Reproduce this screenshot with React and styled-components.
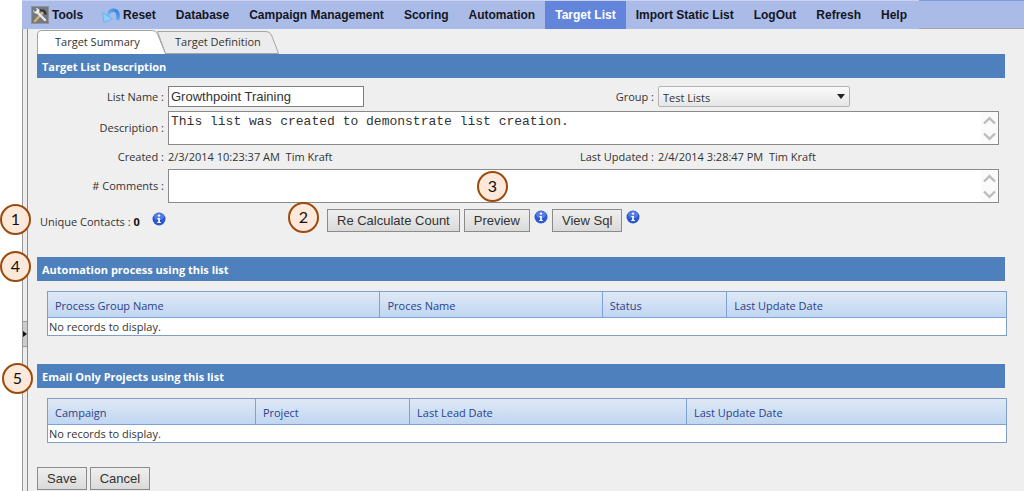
import React from "react";
import styled, { createGlobalStyle } from "styled-components";

const UI = `"Open Sans", "Noto Sans", sans-serif`;
const ARIAL = `"Liberation Sans", Arial, sans-serif`;

const GlobalStyle = createGlobalStyle`
  *, *::before, *::after { box-sizing: border-box; }
  body { margin: 0; background: #fff; font-family: ${UI}; font-size: 11px; line-height: 16px; color: #333; }
  #root { min-height: 100vh; display: flex; flex-direction: column; }
  button, input, select, textarea { font: inherit; color: inherit; margin: 0; }
`;

const Page = styled.div`
  flex: 1;
  display: flex;
  flex-direction: column;
  padding-left: 22px;
`;

const Header = styled.header`
  display: flex;
  align-items: flex-start;
  height: 29px;
`;

const Nav = styled.nav`
  display: flex;
  height: 29px;
  padding: 0 2px 0 9px;
  background: #abbbe8;
  border-top: 1px solid #c9d3f0;
`;

const NavLink = styled.a`
  display: flex;
  align-items: center;
  gap: 3px;
  padding: 0 10px 0 ${(p) => (p.$icon ? "0" : "10px")};
  font: bold 12px/16px ${ARIAL};
  text-decoration: none;
  white-space: nowrap;
  color: ${(p) => (p.$active ? "#fff" : "#14161f")};
  background: ${(p) => (p.$active ? "#6285db" : "transparent")};
  &:nth-child(2) { margin-left: 9px; }
`;

const NavFill = styled.div`
  flex: 1;
  height: 29px;
  background: #abbbe8;
  border-top: 1px solid #7f9be0;
  border-bottom: 1px solid #a3a3ab;
`;

const Body = styled.div`
  flex: 1;
  display: flex;
  background: #efefef;
`;

const Splitter = styled.div`
  flex: none;
  width: 6px;
  border-left: 1px solid #999;
  border-right: 1px solid #8c8c8c;
  background: #ececec;
`;

const Collapse = styled.button`
  display: flex;
  align-items: center;
  width: 4px;
  height: 26px;
  margin-top: 292px;
  padding: 0;
  border: solid #999;
  border-width: 1px 0;
  background: #ccc;
  svg { display: block; flex: none; }
`;

const Main = styled.main`
  flex: 1;
  min-width: 0;
  padding: 1px 19px 1px 9px;
`;

const Tabs = styled.div`
  display: flex;
  align-items: flex-end;
`;

const Tab = styled.button`
  position: relative;
  z-index: ${(p) => (p.$active ? 2 : 1)};
  width: ${(p) => (p.$active ? 129 : 123)}px;
  height: 24px;
  padding: 0 0 0 18px;
  margin-right: -9px;
  border: 0;
  background: none;
  text-align: left;
  line-height: 16px;
  white-space: nowrap;
`;

const TabShape = styled.svg`
  position: absolute;
  inset: 0;
  z-index: -1;
  width: 100%;
  height: 100%;
`;

const SectionBar = styled.h2`
  position: relative;
  margin: ${(p) => p.$above || 0}px 0 0;
  padding: 6px 5px 4px;
  font-size: 11px;
  line-height: 14px;
  font-weight: bold;
  color: #fff;
  background: #4d80bc;
`;

const Form = styled.div`
  display: flex;
  flex-direction: column;
  gap: 4px;
  padding: 8px 6px 0 0;
`;

const Row = styled.div`
  display: grid;
  grid-template-columns: 127px minmax(0, 1fr);
  column-gap: 4px;
  align-items: center;
`;

const Label = styled.label`
  text-align: right;
  white-space: nowrap;
`;

const Split = styled.div`
  display: grid;
  grid-template-columns: minmax(0, 486fr) minmax(0, 341fr);
  column-gap: 4px;
  align-items: center;
`;

const Ends = styled.div`
  display: flex;
  justify-content: space-between;
  align-items: center;
`;

const Meta = styled.span`
  white-space: pre;
`;

const TextInput = styled.input`
  width: 196px;
  height: 21px;
  padding: 0 2px;
  border: 1px solid #7f7f7f;
  background: #fff;
  font: 13px/16px ${ARIAL};
`;

const SelectBox = styled.div`
  position: relative;
  width: 192px;
  height: 21px;
  svg { position: absolute; right: 5px; top: 8px; pointer-events: none; }
`;

const Select = styled.select`
  appearance: none;
  display: block;
  width: 100%;
  height: 21px;
  padding: 2px 4px 0;
  border: 1px solid #b4b4b4;
  border-radius: 2px;
  background: linear-gradient(#fafafa, #e6e6e6);
`;

const AreaBox = styled.div`
  display: flex;
  height: 34px;
  border: 1px solid #8a8a8a;
  background: #fff;
`;

const Area = styled.textarea`
  flex: 1;
  min-width: 0;
  padding: 2px;
  border: 0;
  resize: none;
  overflow: hidden;
  background: transparent;
  font: 13px/16px "Liberation Mono", "Courier New", monospace;
`;

const Arrows = styled.div`
  display: flex;
  flex-direction: column;
  justify-content: space-around;
  align-items: center;
  width: 17px;
  background: #fafafa;
`;

const Actions = styled.div`
  position: relative;
  display: flex;
  align-items: flex-start;
  padding: 6px 0 0 3px;
`;

const Count = styled.div`
  display: flex;
  align-items: center;
  flex: 0 0 287px;
  padding-top: 5px;
  b { margin-left: 3px; color: #111; }
  svg { margin: -6px 0 0 12px; }
`;

const ButtonGroup = styled.div`
  display: flex;
  align-items: flex-start;
  gap: 4px;
  svg { margin-top: 1px; }
`;

const Button = styled.button`
  height: 23px;
  padding: 0 9px;
  border: 1px solid #8b8b8b;
  background: linear-gradient(#efefef, #dadada);
  font: 13px/16px ${ARIAL};
  white-space: nowrap;
`;

const Callout = styled.span`
  position: absolute;
  z-index: 3;
  left: ${(p) => p.$x}px;
  top: ${(p) => p.$y}px;
  display: flex;
  align-items: center;
  justify-content: center;
  width: 31px;
  height: 31px;
  padding-bottom: 2px;
  border: 2px solid #9c4a0c;
  border-radius: 50%;
  background: #fde8da;
  font: 16px/20px Lato, sans-serif;
  color: #111;
`;

const Table = styled.table`
  width: calc(100% - 8px);
  margin: 10px -2px 0 10px;
  border: 1px solid #7f9fc8;
  border-collapse: separate;
  border-spacing: 0;
  table-layout: fixed;
  background: #fff;
`;

const Th = styled.th`
  width: ${(p) => p.$w}%;
  height: 26px;
  padding: 2px 7px 0;
  border-bottom: 1px solid #7fa2d6;
  border-right: 1px solid #7fa2d6;
  &:last-child { border-right: 0; }
  background: linear-gradient(#dfe9f6, #c0d6f1);
  font-weight: normal;
  text-align: left;
  color: #2b3f8c;
`;

const Td = styled.td`
  height: 17px;
  padding: 0 1px;
  line-height: 16px;
`;

const Footer = styled.div`
  display: flex;
  gap: 3px;
  margin-top: 24px;
`;

const ToolsIcon = () => (
  <svg width="18" height="18" viewBox="0 0 18 18" aria-hidden="true">
    <rect width="18" height="18" fill="#8f939c" />
    <rect x="1" y="1" width="16" height="16" fill="#747880" />
    <path d="M4 15 12 6" stroke="#d9b56a" strokeWidth="2.4" strokeLinecap="round" />
    <path d="M9 3l5 1 2 4-2 1-2-3-3-1z" fill="#33363c" />
    <path d="M6 6l8 8" stroke="#e8ebef" strokeWidth="2.4" strokeLinecap="round" />
    <path d="M2 4l2 2 2-2-1-2c3 0 4 3 3 5-2 2-6 0-6-3z" fill="#e8ebef" />
  </svg>
);

const ResetIcon = () => (
  <svg width="18" height="16" viewBox="0 0 18 16" aria-hidden="true">
    <defs>
      <linearGradient id="reset-arc" x1="0" y1="1" x2="1" y2="0">
        <stop offset="0" stopColor="#8fd2fa" />
        <stop offset="1" stopColor="#2f80e0" />
      </linearGradient>
    </defs>
    <path d="M5.500 10C6.500 5.500 9 3 12 3.200 15.500 3.500 17 8 15.200 13" fill="none" stroke="url(#reset-arc)" strokeWidth="3.600" />
    <path d="M.5 5.500 2 15.500 10.500 12z" fill="#8bcff9" stroke="#5aaeee" strokeWidth="0.800" strokeLinejoin="round" />
  </svg>
);

const InfoIcon = () => (
  <svg width="14" height="14" viewBox="0 0 14 14" role="img" aria-label="Info">
    <circle cx="7" cy="7" r="6.5" fill="#2b57cf" />
    <ellipse cx="7" cy="4.6" rx="5" ry="3.6" fill="#6f95ec" opacity="0.6" />
    <circle cx="7" cy="3.6" r="1.2" fill="#fff" />
    <path d="M5.4 6h2.5v4h1v1H5.2v-1h1V7h-.8z" fill="#fff" />
  </svg>
);

const Chevron = ({ down }) => (
  <svg width="13" height="9" viewBox="0 0 13 9" aria-hidden="true">
    <path d={down ? "M1 1.500 6.500 6.800 12 1.500" : "M1 7.500 6.500 2.200 12 7.500"} fill="none" stroke="#bcbcbc" strokeWidth="2.4" />
  </svg>
);

const NAV = [
  { text: "Tools", icon: ToolsIcon },
  { text: "Reset", icon: ResetIcon },
  { text: "Database" },
  { text: "Campaign Management" },
  { text: "Scoring" },
  { text: "Automation" },
  { text: "Target List", active: true },
  { text: "Import Static List" },
  { text: "LogOut" },
  { text: "Refresh" },
  { text: "Help" },
];

function TextArea({ id, value }) {
  return (
    <AreaBox>
      <Area id={id} defaultValue={value} />
      <Arrows>
        <Chevron />
        <Chevron down />
      </Arrows>
    </AreaBox>
  );
}

function Grid({ columns }) {
  return (
    <Table>
      <thead>
        <tr>
          {columns.map(([name, w]) => (
            <Th key={name} $w={w} scope="col">{name}</Th>
          ))}
        </tr>
      </thead>
      <tbody>
        <tr>
          <Td colSpan={columns.length}>No records to display.</Td>
        </tr>
      </tbody>
    </Table>
  );
}

export default function App() {
  return (
    <>
      <GlobalStyle />
      <Page>
        <Header>
          <Nav>
            {NAV.map(({ text, icon: Icon, active }) => (
              <NavLink key={text} href="#" $icon={!!Icon} $active={active}>
                {Icon && <Icon />}
                {text}
              </NavLink>
            ))}
          </Nav>
          <NavFill />
        </Header>
        <Body>
          <Splitter>
            <Collapse aria-label="Expand side panel">
              <svg width="4" height="6" viewBox="0 0 4 6"><path d="M0 0 4 3 0 6z" fill="#111" /></svg>
            </Collapse>
          </Splitter>
          <Main>
            <Tabs role="tablist">
              <Tab role="tab" aria-selected="true" $active>
                <TabShape viewBox="0 0 129 24" preserveAspectRatio="none">
                  <path d="M.5 24V5Q.5.5 5 .5H115Q119 .5 120.500 4L128.500 24" fill="#fff" stroke="#a5a5a5" />
                </TabShape>
                Target Summary
              </Tab>
              <Tab role="tab" aria-selected="false">
                <TabShape viewBox="0 0 123 24" preserveAspectRatio="none">
                  <path d="M.5 1.500H109Q113 1.500 114.500 5L121.500 23.500H8.500z" fill="#ececec" stroke="#a5a5a5" />
                </TabShape>
                Target Definition
              </Tab>
            </Tabs>

            <SectionBar>Target List Description</SectionBar>
            <Form>
              <Row>
                <Label htmlFor="name">List Name :</Label>
                <Split>
                  <Ends>
                    <TextInput id="name" defaultValue="Growthpoint Training" />
                    <Label htmlFor="group">Group :</Label>
                  </Ends>
                  <SelectBox>
                    <Select id="group" defaultValue="Test Lists">
                      <option>Test Lists</option>
                    </Select>
                    <svg width="8" height="5" viewBox="0 0 8 5" aria-hidden="true"><path d="M0 0h8L4 5z" fill="#222" /></svg>
                  </SelectBox>
                </Split>
              </Row>
              <Row>
                <Label htmlFor="description">Description :</Label>
                <TextArea id="description" value="This list was created to demonstrate list creation." />
              </Row>
              <Row>
                <Label as="span">Created :</Label>
                <Split>
                  <Ends>
                    <Meta>{"2/3/2014 10:23:37 AM  Tim Kraft"}</Meta>
                    <Label as="span">Last Updated :</Label>
                  </Ends>
                  <Meta>{"2/4/2014 3:28:47 PM  Tim Kraft"}</Meta>
                </Split>
              </Row>
              <Row>
                <Label htmlFor="comments"># Comments :</Label>
                <TextArea id="comments" value="" />
              </Row>
            </Form>
            <Actions>
              <Callout $x={-37} $y={1}>1</Callout>
              <Callout $x={251} $y={-1}>2</Callout>
              <Callout $x={440} $y={-32}>3</Callout>
              <Count>
                Unique Contacts : <b>0</b>
                <InfoIcon />
              </Count>
              <ButtonGroup>
                <Button>Re Calculate Count</Button>
                <Button>Preview</Button>
                <InfoIcon />
                <Button>View Sql</Button>
                <InfoIcon />
              </ButtonGroup>
            </Actions>

            <SectionBar $above={25}>
              <Callout $x={-37} $y={-6}>4</Callout>
              Automation process using this list
            </SectionBar>
            <Grid columns={[["Process Group Name", 34.7], ["Proces Name", 23.2], ["Status", 13], ["Last Update Date", 29.1]]} />

            <SectionBar $above={28}>
              <Callout $x={-35} $y={-1}>5</Callout>
              Email Only Projects using this list
            </SectionBar>
            <Grid columns={[["Campaign", 21.7], ["Project", 16.1], ["Last Lead Date", 28.9], ["Last Update Date", 33.3]]} />

            <Footer>
              <Button>Save</Button>
              <Button>Cancel</Button>
            </Footer>
          </Main>
        </Body>
      </Page>
    </>
  );
}
